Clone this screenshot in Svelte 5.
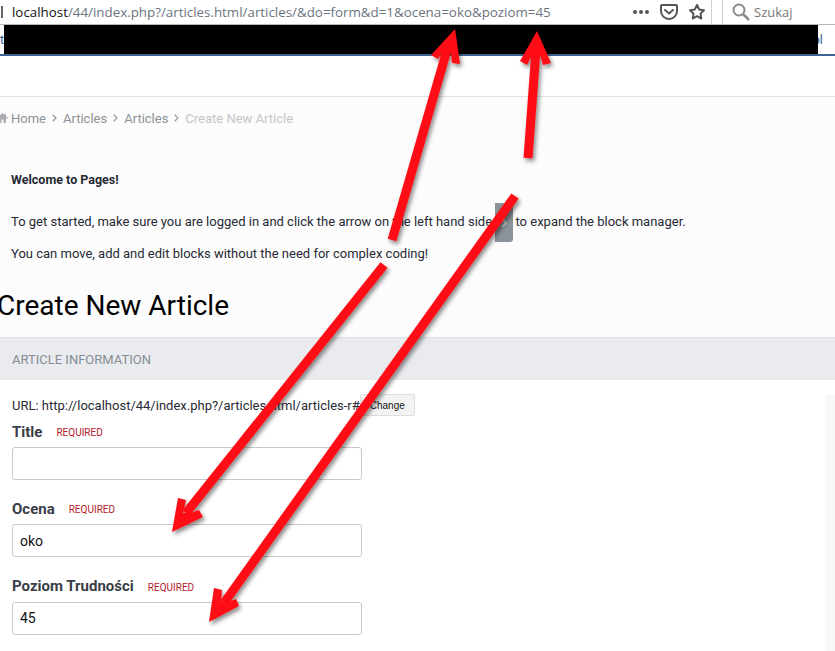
<script>
  let fields = [
    { label: 'Title', value: '' },
    { label: 'Ocena', value: 'oko' },
    { label: 'Poziom Trudności', value: '45' },
  ]

  let crumbs = ['Articles', 'Articles', 'Create New Article']

  // annotation arrows: shaft line plus the head outline
  let arrows = [
    { from: [392, 240], to: [447, 50], head: '455,29 431,55 438,59 443,51 451,53 452,63 460,64' },
    { from: [528, 158], to: [536, 50], head: '537,31 520,61 527,65 532,55 540,55 543,65 551,63' },
    { from: [384, 265], to: [186, 513], head: '172,532 178,498 186,500 183,513 190,513 199,510 203,517' },
    { from: [515, 196], to: [224, 603], head: '209,622 214,588 222,590 221,602 228,602 236,599 239,606' },
  ]
</script>

<div class="page">
  <div class="urlbar">
    <span class="site-icon"></span>
    <div class="url"><span class="host">localhost</span>/44/index.php?/articles.html/articles/&amp;do=form&amp;d=1&amp;ocena=oko&amp;poziom=45</div>
    <div class="actions">
      <span class="dots"><i></i><i></i><i></i></span>
      <svg width="20" height="18" viewBox="0 0 20 18" fill="none" stroke="#555" stroke-width="2">
        <path d="M3 2h14a1 1 0 0 1 1 1v5a8 8 0 0 1-16 0V3a1 1 0 0 1 1-1z" />
        <path d="M6 7l4 3.500L14 7" stroke-linecap="round" />
      </svg>
      <svg width="18" height="18" viewBox="0 0 18 18" fill="none" stroke="#555" stroke-width="2" stroke-linejoin="round">
        <path d="M9 2l2.200 4.500 4.800.7-3.500 3.400.8 4.900L9 13.200l-4.300 2.300.8-4.900L2 7.200l4.800-.7z" />
      </svg>
    </div>
    <div class="search">
      <svg width="20" height="20" viewBox="0 0 20 20" fill="none" stroke="#8a8a8a" stroke-width="2">
        <circle cx="8" cy="8" r="5.500" />
        <path d="M12 12l6 6" stroke-width="2.500" />
      </svg>
      <span>Szukaj</span>
    </div>
  </div>

  <div class="tabs">
    <span class="tab-edge">t</span>
    <div class="redacted"></div>
    <span class="tab-edge end">ol</span>
  </div>

  <div class="header"></div>

  <main>
    <nav class="crumbs">
      <svg class="home" width="11" height="10" viewBox="0 0 11 10" fill="#a9acb0">
        <path d="M5.500 0L0 5l.7.8L2 4.700V10h2.500V6.500h2V10H9V4.700l1.300 1.100.7-.8L9 3.200V.7H7.500v1.200z" />
      </svg>
      <span>Home</span>
      {#each crumbs as crumb, i}
        <svg width="5" height="8" viewBox="0 0 5 8" fill="none" stroke="#9a9ea3" stroke-width="1.300"><path d="M.7.7L4 4 .7 7.300" /></svg>
        <span class:current={i === crumbs.length - 1}>{crumb}</span>
      {/each}
    </nav>

    <section class="welcome">
      <p class="lead">Welcome to Pages!</p>
      <p class="start">To get started, make sure you are logged in and click the arrow on the left hand side <span class="toggle"><svg width="8" height="10" viewBox="0 0 8 10" fill="none" stroke="#c9ccd0" stroke-width="2"><path d="M2 1l4 4-4 4" /></svg></span> to expand the block manager.</p>
      <p>You can move, add and edit blocks without the need for complex coding!</p>
    </section>

    <h1>Create New Article</h1>

    <div class="section-title">ARTICLE INFORMATION</div>

    <form>
      <div class="url-row">
        <span>URL: http://localhost/44/index.php?/articles.html/articles-r#</span>
        <button type="button">Change</button>
      </div>
      {#each fields as field}
        <div class="field">
          <div class="label"><strong>{field.label}</strong><em>REQUIRED</em></div>
          <input type="text" value={field.value} />
        </div>
      {/each}
    </form>
    <div class="side"></div>
  </main>

  <svg class="arrows" width="835" height="651" viewBox="0 0 835 651">
    <defs>
      <filter id="shadow" x="-20%" y="-20%" width="140%" height="140%">
        <feDropShadow dx="2" dy="3" stdDeviation="2" flood-color="#000" flood-opacity="0.45" />
      </filter>
    </defs>
    {#each arrows as arrow}
      <g filter="url(#shadow)">
        <line x1={arrow.from[0]} y1={arrow.from[1]} x2={arrow.to[0]} y2={arrow.to[1]} stroke="#ff0b12" stroke-width="9" />
        <polygon points={arrow.head} fill="#ff0b12" />
      </g>
    {/each}
  </svg>
</div>

<style>
  :global(body) {
    margin: 0;
    background: #fff;
    font-family: Roboto, "Liberation Sans", sans-serif;
  }
  .page {
    position: relative;
    width: 835px;
    height: 651px;
    overflow: hidden;
    display: flex;
    flex-direction: column;
  }
  .urlbar {
    height: 24px;
    flex: none;
    display: flex;
    align-items: center;
    border-bottom: 1px solid #b8b8b8;
    font: 14px "Open Sans", "Liberation Sans", sans-serif;
  }
  .site-icon {
    width: 3px;
    height: 12px;
    margin-right: 9px;
    border-right: 2px solid #666;
    box-sizing: border-box;
  }
  .url {
    width: 609px;
    flex: none;
    font-size: 13.350px;
    color: #6b7480;
    white-space: nowrap;
  }
  .host {
    color: #111;
  }
  .actions {
    width: 91px;
    height: 24px;
    flex: none;
    box-sizing: border-box;
    padding-right: 5px;
    display: flex;
    align-items: center;
    justify-content: flex-end;
    gap: 9px;
    border-right: 1px solid #d0d0d0;
  }
  .dots {
    display: flex;
    gap: 2px;
    margin-right: 1px;
  }
  .dots i {
    width: 4px;
    height: 4px;
    border-radius: 50%;
    background: #555;
  }
  .search {
    flex: 1;
    height: 24px;
    margin-left: 10px;
    padding-left: 8px;
    display: flex;
    align-items: center;
    gap: 3px;
    border-left: 1px solid #d0d0d0;
    color: #777;
    font-size: 13px;
  }
  .tabs {
    height: 29px;
    flex: none;
    display: flex;
    align-items: center;
    border-bottom: 2px solid #3d6490;
    font-size: 12px;
    color: #2a5d8f;
  }
  .tab-edge {
    width: 4px;
    overflow: hidden;
    flex: none;
  }
  .tab-edge.end {
    width: auto;
    margin-left: -5px;
    position: relative;
    z-index: -1;
  }
  .redacted {
    width: 814px;
    height: 100%;
    flex: none;
    background: #000;
  }
  .header {
    height: 40px;
    flex: none;
    background: #fff;
    border-bottom: 1px solid #e2e2e2;
  }
  main {
    position: relative;
    flex: 1;
    background: #fcfcfc;
    color: #272a34;
  }
  .crumbs {
    height: 42px;
    display: flex;
    align-items: center;
    gap: 6px;
    font-size: 13px;
    color: #8d9298;
  }
  .crumbs .home {
    margin-left: -3px;
    margin-right: -3px;
  }
  .current {
    color: #c2c5c9;
  }
  .welcome {
    padding: 31px 0 0 11px;
    font-size: 13px;
    line-height: 20px;
  }
  .welcome p {
    margin: 0 0 12px;
    white-space: nowrap;
  }
  .welcome .lead {
    font-weight: 700;
    font-size: 12.500px;
    margin-bottom: 22px;
  }
  .toggle {
    display: inline-flex;
    align-items: center;
    justify-content: center;
    width: 18px;
    height: 39px;
    margin: -20px -1px -20px 0;
    vertical-align: middle;
    background: #8b9299;
    border-radius: 0 0 3px 0;
  }
  h1 {
    margin: 25px 0 14px -3px;
    font-size: 28px;
    font-weight: 400;
    line-height: 34px;
    color: #000;
    white-space: nowrap;
  }
  .section-title {
    height: 43px;
    box-sizing: border-box;
    padding-left: 12px;
    display: flex;
    align-items: center;
    background: #e9ebef;
    border-top: 1px solid #dcdee1;
    font-size: 13px;
    color: #858d96;
  }
  form {
    background: #fff;
    padding: 14px 0 30px 12px;
  }
  .url-row {
    display: flex;
    align-items: center;
    height: 22px;
    font-size: 13px;
    color: #272a34;
    white-space: nowrap;
  }
  button {
    width: 55px;
    height: 22px;
    padding: 0;
    font: 10px "Liberation Sans", sans-serif;
    color: #111;
    background: #f3f3f3;
    border: 1px solid #dedede;
    border-radius: 2px;
  }
  .field {
    width: 350px;
    margin-bottom: 13.400px;
  }
  .label {
    height: 28px;
    box-sizing: border-box;
    padding-top: 3px;
    margin-bottom: 3px;
    display: flex;
    align-items: center;
    gap: 14px;
  }
  .label strong {
    font-size: 15px;
    font-weight: 700;
    color: #393d47;
  }
  .label em {
    font-style: normal;
    font-size: 10px;
    color: #b3202a;
    padding-top: 2px;
  }
  input {
    display: block;
    width: 100%;
    height: 33px;
    box-sizing: border-box;
    padding: 0 7px;
    background: #fff;
    border: 1px solid #c9c9c9;
    border-radius: 3px;
    font: 14px Roboto, sans-serif;
    color: #111;
  }
  .side {
    position: absolute;
    top: 298px;
    right: 0;
    bottom: 0;
    width: 10px;
    background: #f8f8f8;
  }
  .arrows {
    position: absolute;
    left: 0;
    top: 0;
    pointer-events: none;
  }
</style>
